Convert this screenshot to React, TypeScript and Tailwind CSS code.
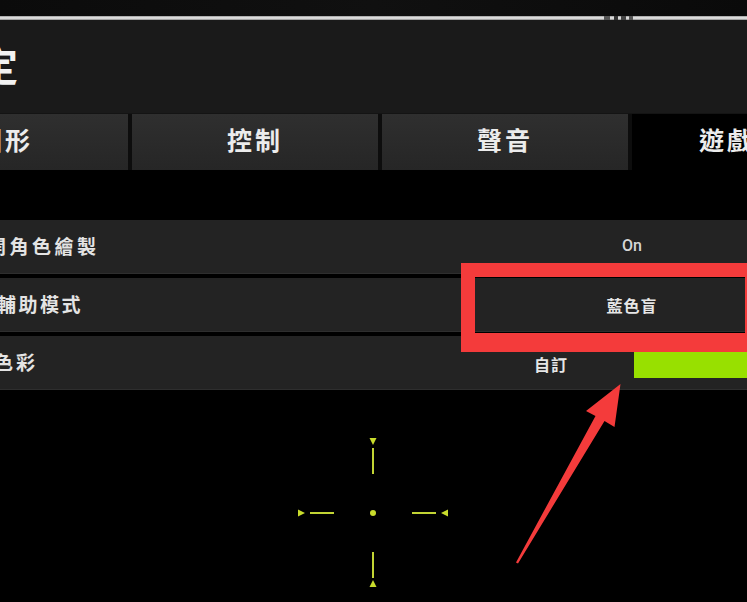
import React from "react";

const Tab = ({ label, active }: { label: string; active?: boolean }) => (
  <div
    className={
      "w-[246px] shrink-0 h-full flex items-center justify-center pb-[5px] text-[25px] font-bold tracking-[3px] text-[#ececec] " +
      (active ? "bg-black" : "bg-gradient-to-b from-[#2f2f2f] to-[#262626]")
    }
  >
    {label}
  </div>
);

const Row = ({ children }: { children: React.ReactNode }) => (
  <div className="h-[54px] bg-[#232323] border-b border-[#2e2e2e] flex items-center relative">{children}</div>
);

export default function App() {
  return (
    <div className="w-[747px] h-[602px] bg-black overflow-hidden relative font-['Noto_Sans_CJK_TC',sans-serif] flex flex-col">
      {/* top strip */}
      <div className="h-[16px] bg-gradient-to-r from-[#0b0b0b] via-[#101010] to-[#0a0a0a] shrink-0" />
      <div className="h-[4px] shrink-0 bg-gradient-to-b from-[#9a9a9a] via-[#f2f2f2] to-[#8a8a8a] relative">
        <div className="absolute left-[604px] top-0 w-[6px] h-[4px] bg-[#555]" />
        <div className="absolute left-[614px] top-0 w-[4px] h-[4px] bg-[#333]" />
        <div className="absolute left-[621px] top-0 w-[5px] h-[4px] bg-[#444]" />
        <div className="absolute left-[629px] top-0 w-[4px] h-[4px] bg-[#555]" />
      </div>

      {/* header */}
      <div className="h-[93px] shrink-0 bg-[#1a1a1a] flex items-center pb-[6px]">
        <span className="ml-[-22px] text-[40px] leading-none font-bold text-[#f2f2f2] tracking-[2px]">定</span>
      </div>

      {/* tabs */}
      <div className="h-[57px] shrink-0 flex gap-[4px] ml-[-118px] bg-[#0d0d0d] border-t border-[#141414]">
        <Tab label="圖形" />
        <Tab label="控制" />
        <Tab label="聲音" />
        <Tab label="遊戲設定" active />
      </div>

      <div className="h-[50px] shrink-0 bg-black" />

      {/* rows */}
      <div className="flex flex-col gap-[4px] shrink-0">
        <Row>
          <span className="ml-[-13px] text-[19px] font-bold tracking-[3.5px] text-[#e4e4e4] whitespace-nowrap">開角色繪製</span>
          <div className="ml-auto w-[230px] text-center text-[16px] text-[#d6d6d6] font-['Roboto',sans-serif] font-medium pb-[2px]">On</div>
        </Row>
        <Row>
          <span className="ml-[-3px] text-[19px] font-bold tracking-[2.5px] text-[#e4e4e4] whitespace-nowrap">輔助模式</span>
          <div className="ml-auto w-[230px] text-center text-[16px] font-bold tracking-[1px] text-[#e6e6e6]">藍色盲</div>
        </Row>
        <Row>
          <span className="ml-[-6px] text-[19px] font-bold tracking-[3px] text-[#e4e4e4] whitespace-nowrap">色彩</span>
          <span className="ml-auto text-[16px] font-bold tracking-[1px] text-[#e6e6e6] pt-[2px]">自訂</span>
          <div className="ml-[66px] mr-[-10px] w-[123px] h-[26px] mt-[4px] bg-[#98e000]" />
        </Row>
      </div>

      {/* crosshair preview */}
      <div className="flex-1">
        <svg width="747" height="212" viewBox="0 0 747 212" className="block">
          <g fill="#c9dc2c" stroke="none">
            <polygon points="369.5,48 376.5,48 373,55" />
            <polygon points="369.5,197 376.5,197 373,190" />
            <polygon points="298,119.5 298,126.5 305,123" />
            <polygon points="448,119.5 448,126.5 441,123" />
            <circle cx="373" cy="123" r="3" />
          </g>
          <g stroke="#c2d434" strokeWidth="2">
            <line x1="373" y1="58" x2="373" y2="84" />
            <line x1="373" y1="162" x2="373" y2="188" />
            <line x1="310" y1="123" x2="334" y2="123" />
            <line x1="412" y1="123" x2="436" y2="123" />
          </g>
        </svg>
      </div>

      {/* annotation: red frame */}
      <div className="absolute left-[461px] top-[263px] w-[292px] h-[89px] border-t-[14px] border-l-[14px] border-b-[19px] border-r-[8px] border-[#f43b3b]" />

      {/* annotation: red arrow */}
      <svg className="absolute left-0 top-0 pointer-events-none" width="747" height="602" viewBox="0 0 747 602">
        <polygon
          fill="#f43b3b"
          points="620.5,384 614.5,427 604.5,421 518,563.5 516,562.5 595.5,416 586,411"
        />
      </svg>
    </div>
  );
}
